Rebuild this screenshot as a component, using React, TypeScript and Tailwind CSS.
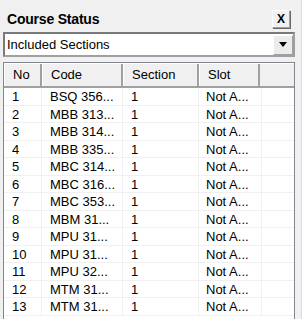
const rows: [string, string][] = [
  ["1", "BSQ 356..."],
  ["2", "MBB 313..."],
  ["3", "MBB 314..."],
  ["4", "MBB 335..."],
  ["5", "MBC 314..."],
  ["6", "MBC 316..."],
  ["7", "MBC 353..."],
  ["8", "MBM 31..."],
  ["9", "MPU 31..."],
  ["10", "MPU 31..."],
  ["11", "MPU 32..."],
  ["12", "MTM 31..."],
  ["13", "MTM 31..."],
];

const cols = [
  { title: "No", w: "w-[38px]" },
  { title: "Code", w: "w-[81px]" },
  { title: "Section", w: "w-[76px]" },
  { title: "Slot", w: "w-[61px]" },
];

export default function App() {
  return (
    <div className="w-[302px] h-[319px] overflow-hidden bg-[#f0f0f0] text-[13px] text-black font-['Liberation_Sans',Arial,sans-serif] border-r border-[#dcdcdc]">
      <div className="pl-[3px] pt-[9px] w-[295px]">
        {/* title */}
        <div className="flex items-center justify-between h-[20px]">
          <span className="pl-[4px] font-bold text-[14px] tracking-[-0.2px]">Course Status</span>
          <button className="w-[18px] h-[18px] mr-[5px] flex items-center justify-center bg-[#f0f0f0] border border-t-white border-l-white border-r-[#a0a0a0] border-b-[#a0a0a0] shadow-[1px_1px_0_#696969]">
            <span className="font-bold text-[12px] leading-none">X</span>
          </button>
        </div>

        {/* combo */}
        <div className="mt-[3px] h-[25px] w-[292px] flex items-center bg-white border-2 border-t-[#7a7a7a] border-l-[#7a7a7a] border-r-[#a0a0a0] border-b-[#a0a0a0]">
          <span className="flex-1 pl-[2px]">Included Sections</span>
          <div className="w-[20px] h-[20px] flex items-center justify-center bg-[#ececec] border border-t-white border-l-white border-r-[#a0a0a0] border-b-[#a0a0a0]">
            <svg width="8" height="5" viewBox="0 0 8 5">
              <path d="M0 0h8L4 5z" fill="#000" />
            </svg>
          </div>
        </div>

        {/* list */}
        <div className="mt-[5px] w-[292px] h-[270px] bg-white border border-[#828790] overflow-hidden">
          <div className="flex h-[25px] bg-[#f0f0f0] border-b-2 border-[#a0a0a0] border-t border-t-white">
            {cols.map((c) => (
              <div
                key={c.title}
                className={`${c.w} shrink-0 flex items-center pl-[8px] border-r-2 border-r-[#a0a0a0] border-l border-l-white`}
              >
                {c.title}
              </div>
            ))}
            <div className="flex-1" />
          </div>
          {rows.map(([no, code]) => (
            <div key={no} className="flex h-[17.5px] border-b border-[#f0f0f0] leading-[18px]">
              <div className="w-[38px] shrink-0 pl-[8px] border-r border-[#f0f0f0]">{no}</div>
              <div className="w-[81px] shrink-0 pl-[8px] border-r border-[#f0f0f0]">{code}</div>
              <div className="w-[76px] shrink-0 pl-[8px] border-r border-[#f0f0f0]">1</div>
              <div className="w-[63px] shrink-0 pl-[7px] border-r border-[#f0f0f0]">Not A...</div>
              <div className="flex-1" />
            </div>
          ))}
        </div>
      </div>
    </div>
  );
}
